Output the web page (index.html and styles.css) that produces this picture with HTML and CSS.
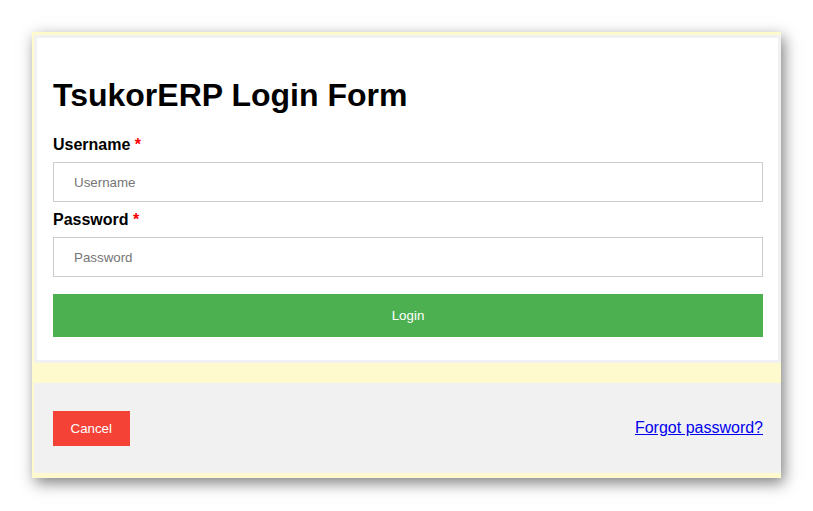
FILE: index.html
```html
<!DOCTYPE html>
<html lang="en">
<head>
<meta charset="utf-8">
<title>TsukorERP Login Form</title>
<link rel="stylesheet" href="styles.css">
</head>
<body>
<div class="modal">
  <form class="login-box">
    <h1 class="title">TsukorERP Login Form</h1>
    <label class="field-label" for="uname">Username <span class="req">*</span></label>
    <input class="field-input" id="uname" type="text" placeholder="Username">
    <label class="field-label second" for="psw">Password <span class="req">*</span></label>
    <input class="field-input" id="psw" type="password" placeholder="Password">
    <button class="login-btn" type="button">Login</button>
  </form>
  <div class="footer">
    <button class="cancel-btn" type="button">Cancel</button>
    <a class="forgot" href="#">Forgot password?</a>
  </div>
</div>
</body>
</html>
```
FILE: styles.css
```css
html, body {
  margin: 0;
  padding: 0;
  background: #ffffff;
}
body {
  padding: 32px;
  font-family: "Liberation Sans", Arial, sans-serif;
}
.modal {
  background: #fffacd;
  padding: 3px 0 5px 2px;
  display: flex;
  flex-direction: column;
  gap: 20px;
  box-shadow: 3px 5px 14px rgba(0, 0, 0, 0.5);
}
.login-box {
  display: flex;
  flex-direction: column;
  background: #ffffff;
  border: 3px solid #f1f1f1;
  padding: 17px 15px 23px 16px;
  margin: 0;
}
.title {
  font-size: 32px;
  line-height: 37px;
  font-weight: bold;
  color: #000;
  margin: 22px 0 22px;
}
.field-label {
  font-size: 16px;
  line-height: 18px;
  font-weight: bold;
  color: #000;
}
.field-label.second {
  margin-top: 9px;
}
.req {
  color: #ff0000;
}
.field-input {
  box-sizing: border-box;
  height: 40px;
  width: 100%;
  margin-top: 8px;
  padding: 0 20px;
  border: 1px solid #cccccc;
  font-family: "Liberation Sans", Arial, sans-serif;
  font-size: 13.33px;
  color: #000;
  background: #fff;
  outline: none;
}
.field-input::placeholder {
  color: #757575;
}
.login-btn {
  margin-top: 17px;
  height: 43px;
  border: none;
  background: #4caf50;
  color: #ffffff;
  font-family: "Liberation Sans", Arial, sans-serif;
  font-size: 13.33px;
  width: 100%;
  cursor: pointer;
}
.footer {
  background: #f1f1f1;
  height: 90px;
  display: flex;
  align-items: center;
  justify-content: space-between;
  padding: 1px 18px 0 19px;
  box-sizing: border-box;
}
.cancel-btn {
  background: #f44336;
  color: #ffffff;
  border: none;
  height: 35px;
  padding: 0 17.5px;
  font-family: "Liberation Sans", Arial, sans-serif;
  font-size: 13.33px;
  cursor: pointer;
}
.forgot {
  font-size: 16px;
  color: #0000ee;
  text-decoration: underline;
  margin-bottom: 2px;
}
```
